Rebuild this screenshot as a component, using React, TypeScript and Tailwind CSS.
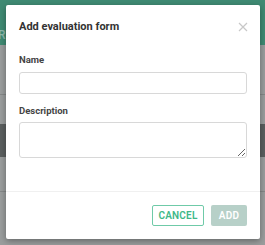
import React from 'react';

const App: React.FC = () => {
  return (
    <div className="relative w-[265px] h-[245px] overflow-hidden bg-[#9a9d9d] font-['Roboto',sans-serif]">
      {/* page behind the overlay */}
      <div className="h-[45px] bg-[#3f8a73] flex items-end pb-[1px]">
        <span className="text-[12px] font-medium text-[#8fb9ac] -ml-[2px]">R</span>
      </div>
      <div className="h-[49px]" />
      <div className="h-px bg-[#858888]" />
      <div className="h-[29px]" />
      <div className="h-[33px] bg-[#5b5f5f]" />
      <div className="h-[34px]" />
      <div className="h-px bg-[#858888]" />

      {/* modal */}
      <div className="absolute left-[6px] top-[5px] w-[254px] h-[234px] bg-white rounded-[2px] shadow-[0_2px_6px_rgba(0,0,0,0.35)] flex flex-col">
        <div className="flex items-center justify-between pl-[13px] pr-[12px] pt-[10px] h-[24px] box-content">
          <h2 className="text-[11px] leading-[14px] font-bold text-[#333]">Add evaluation form</h2>
          <svg width="10" height="10" viewBox="0 0 10 10">
            <path d="M1 1L9 9M9 1L1 9" stroke="#c8c8c8" strokeWidth="1.2" />
          </svg>
        </div>
        <div className="px-[13px] pt-[15px] flex flex-col">
          <label className="text-[9.5px] font-bold text-[#444] leading-[12px]">Name</label>
          <input className="mt-[6px] h-[22px] w-full border border-[#d8d8d8] rounded-[3px] outline-none" />
          <label className="mt-[11px] text-[9.5px] font-bold text-[#444] leading-[12px]">Description</label>
          <textarea className="mt-[5px] h-[36px] w-full border border-[#d8d8d8] rounded-[3px] outline-none resize-y block" />
        </div>
        <div className="mt-auto border-t border-[#f0f0f0] h-[48px] flex items-start justify-end gap-[7px] pr-[13px] pt-[13px]">
          <button className="h-[21px] w-[52px] border border-[#6fcaa8] rounded-[2px] text-[10px] font-semibold text-[#3fb889] tracking-[0.2px]">CANCEL</button>
          <button className="h-[21px] w-[36px] bg-[#b7d0c8] rounded-[2px] text-[10px] font-semibold text-white tracking-[0.2px]">ADD</button>
        </div>
      </div>
    </div>
  );
};

export default App;
